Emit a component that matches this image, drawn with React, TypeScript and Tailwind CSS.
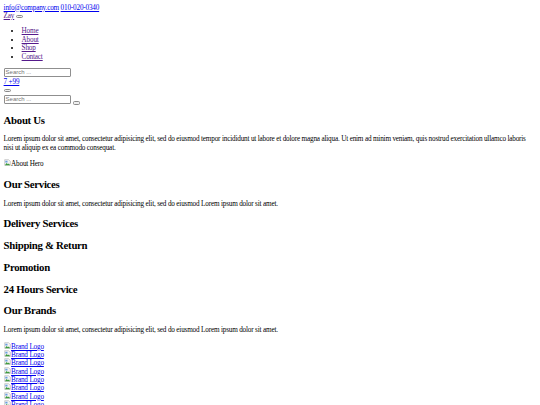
import React from "react";

const Broken = () => (
  <svg width="7" height="7" viewBox="0 0 16 16" className="inline-block align-baseline mr-[0.5px]">
    <path d="M1.5 1.5h9l4 4v9h-13z" fill="#f4f4f4" stroke="#9a9a9a" strokeWidth="1" />
    <path d="M2 14l4-5 3 3 2-2 3 4z" fill="#3a9a3a" />
    <path d="M3 4h5v4H3z" fill="#6aa0e0" />
  </svg>
);

const BtnEmpty = () => (
  <span className="inline-block w-[7px] h-[3.5px] border border-[#8a8a8a] bg-[#efefef] rounded-[1.5px] align-middle" />
);

const SearchInput = () => (
  <span className="inline-block w-[67px] h-[9.5px] border border-[#8f8f8f] rounded-[1px] bg-white align-top px-[1px] text-[6px] leading-[7.5px] tracking-normal text-[#757575] font-['Liberation_Sans',sans-serif]">
    Search ...
  </span>
);

const blue = "text-[#0000EE] underline";
const purple = "text-[#551A8B] underline";
const h2 = "text-[10.8px] leading-[12.6px] font-bold tracking-[-0.3px] mt-[9.2px] mb-[9.2px]";

export default function App() {
  const lorem = "Lorem ipsum dolor sit amet, consectetur adipisicing elit, sed do eiusmod Lorem ipsum dolor sit amet.";
  return (
    <div className="min-h-[405px] bg-white text-black font-['Liberation_Serif',serif] text-[7.2px] leading-[8.4px] tracking-[-0.18px] px-[3.6px] pt-[3.6px]">
      <div>
        <span className={blue}>info@company.com</span> <span className={blue}>010-020-0340</span>
      </div>
      <div>
        <span className={purple}>Zay</span> <BtnEmpty />
      </div>
      <ul className="mt-[6.6px] mb-[6.5px] pl-[18px] list-disc leading-[8.6px]">
        <li><span className={purple}>Home</span></li>
        <li><span className={purple}>About</span></li>
        <li><span className={purple}>Shop</span></li>
        <li><span className={purple}>Contact</span></li>
      </ul>
      <div className="h-[10px]">
        <SearchInput />
      </div>
      <div>
        <span className={blue}>7 +99</span>
      </div>
      <div className="h-[8.6px] flex items-center">
        <BtnEmpty />
      </div>
      <div className="h-[9.5px] flex items-start gap-[2px]">
        <SearchInput />
        <span className="mt-[4px]"><BtnEmpty /></span>
      </div>

      <h2 className={h2}>About Us</h2>
      <p className="mb-[7.2px]">
        Lorem ipsum dolor sit amet, consectetur adipisicing elit, sed do eiusmod tempor incididunt ut labore et dolore magna aliqua. Ut enim ad minim veniam, quis nostrud exercitation ullamco laboris nisi ut aliquip ex ea commodo consequat.
      </p>
      <div><Broken />About Hero</div>

      <h2 className={h2}>Our Services</h2>
      <p>{lorem}</p>
      <h2 className={h2}>Delivery Services</h2>
      <h2 className={h2}>Shipping &amp; Return</h2>
      <h2 className={h2}>Promotion</h2>
      <h2 className={h2}>24 Hours Service</h2>
      <h2 className={h2}>Our Brands</h2>
      <p className="mb-[7.2px]">{lorem}</p>
      {Array.from({ length: 8 }).map((_, i) => (
        <div key={i} className="h-[8.3px] leading-[8.3px]">
          <span className={blue}><Broken />Brand Logo</span>
        </div>
      ))}
    </div>
  );
}
